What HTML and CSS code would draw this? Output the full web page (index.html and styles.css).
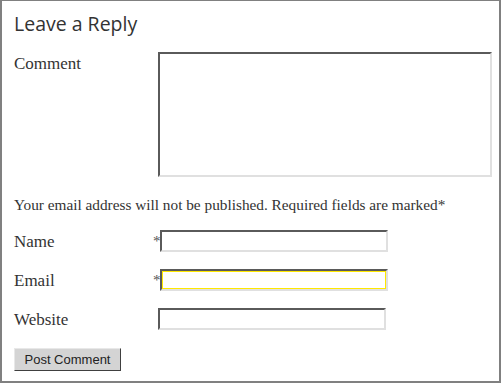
FILE: index.html
```html
<!DOCTYPE html>
<html lang="en">
<head>
    <meta charset="UTF-8">
    <meta name="viewport" content="width=device-width, initial-scale=1.0">
    <title>Leave a Reply</title>
    <link rel="stylesheet" href="styles.css">
</head>
<body>
    <!-- Reply form -->
    <div class="reply-box">
        <h3 class="reply-title">Leave a Reply</h3>

        <form class="comment-form">
            <div class="comment-row">
                <label for="comment">Comment</label>
                <textarea id="comment"></textarea>
            </div>

            <p class="notes">Your email address will not be published. Required fields are marked*</p>

            <div class="field-row">
                <label for="author">Name</label>
                <span class="req">*</span>
                <input type="text" id="author">
            </div>

            <div class="field-row">
                <label for="email">Email</label>
                <span class="req">*</span>
                <input type="text" id="email" class="focused">
            </div>

            <div class="field-row optional">
                <label for="url">Website</label>
                <input type="text" id="url">
            </div>

            <button type="button" class="submit">Post Comment</button>
        </form>
    </div>
</body>
</html>
```

FILE: styles.css
```css
* {
    margin: 0;
    padding: 0;
    box-sizing: border-box;
}

body {
    background-color: #fff;
    color: #333;
    font-family: "Liberation Serif", serif;
    font-size: 17px;
}

.reply-box {
    width: 501px;
    height: 383px;
    border: 2px solid #808080;
    border-top-width: 1px;
    padding: 11px 0 0 12px;
}

.reply-title {
    font-family: "Open Sans", sans-serif;
    font-weight: normal;
    font-size: 19.5px;
    line-height: 24px;
    color: #333;
    margin-bottom: 16px;
}

.comment-row {
    display: flex;
    align-items: flex-start;
}

.comment-row label {
    width: 144px;
    line-height: 20px;
    margin-top: 2px;
}

textarea {
    width: 334px;
    height: 125px;
    border: 2px solid;
    border-color: #5a5a5a #e0e0e0 #e0e0e0 #5a5a5a;
    resize: none;
    background: #fff;
}

.notes {
    margin-top: 18px;
    line-height: 20px;
    font-size: 15.3px;
}

.field-row {
    display: flex;
    align-items: center;
    margin-top: 15px;
    height: 22px;
}

.field-row + .field-row {
    margin-top: 17px;
}

.field-row label {
    width: 139px;
    padding-top: 2px;
}

.req {
    width: 7px;
    font-size: 15px;
    line-height: 13px;
    color: #555;
}

.field-row input {
    width: 228px;
    height: 22px;
    border: 2px solid;
    border-color: #5a5a5a #e0e0e0 #e0e0e0 #5a5a5a;
    background: #fff;
}

.field-row.optional input {
    margin-left: 5px;
}

input.focused {
    box-shadow: inset 0 0 0 1px #ffe800;
}

.submit {
    margin-top: 18px;
    width: 107px;
    height: 23px;
    font-family: "Liberation Sans", Arial, sans-serif;
    font-size: 13px;
    color: #222;
    background: #d4d4d4;
    border: 1px solid;
    border-color: #e8e8e8 #404040 #404040 #e8e8e8;
}
```
